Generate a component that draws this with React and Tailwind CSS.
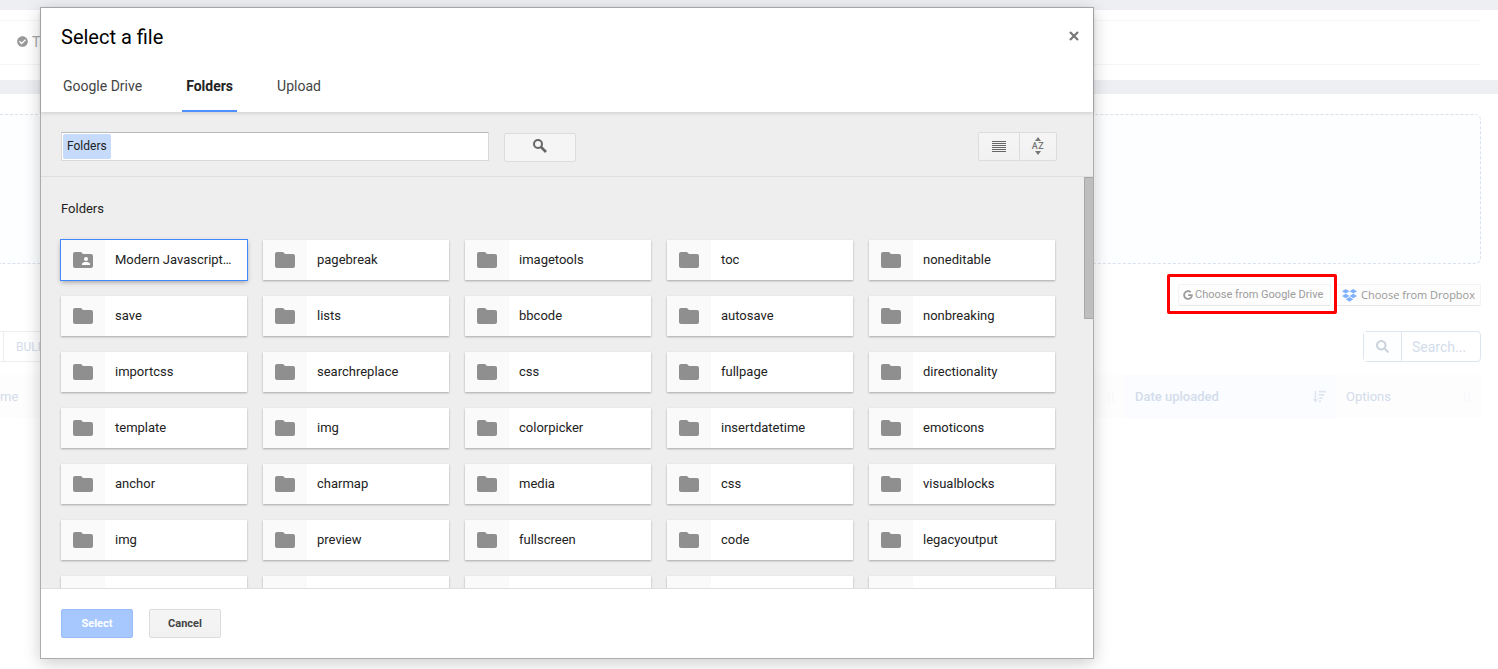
import React, { useState } from 'react';
import { FaCheckCircle, FaGoogle, FaSearch, FaSortAmountDown } from 'react-icons/fa';

const folders = [
  'Modern Javascript…', 'pagebreak', 'imagetools', 'toc', 'noneditable',
  'save', 'lists', 'bbcode', 'autosave', 'nonbreaking',
  'importcss', 'searchreplace', 'css', 'fullpage', 'directionality',
  'template', 'img', 'colorpicker', 'insertdatetime', 'emoticons',
  'anchor', 'charmap', 'media', 'css', 'visualblocks',
  'img', 'preview', 'fullscreen', 'code', 'legacyoutput',
  '', '', '', '', '',
];

const tabs = ['Google Drive', 'Folders', 'Upload'];

function FolderIcon({ shared }) {
  return (
    <svg width="20" height="16" viewBox="0 0 20 16" aria-hidden="true">
      <path d="M2 0h6l2 2h8a2 2 0 0 1 2 2v10a2 2 0 0 1-2 2H2a2 2 0 0 1-2-2V2a2 2 0 0 1 2-2z" fill="#8f8f8f" />
      {shared && (
        <path d="M13 5a2 2 0 1 1 0 4 2 2 0 0 1 0-4zM9 13v-1c0-1.400 2.700-2 4-2s4 .6 4 2v1z" fill="#fff" />
      )}
    </svg>
  );
}

function DropboxIcon() {
  return (
    <svg width="15" height="13" viewBox="0 0 15 13" fill="#7fb1ff" className="shrink-0" aria-hidden="true">
      <path d="M3.750 0l3.750 2.300-3.750 2.300L0 2.300zM11.250 0L15 2.300l-3.750 2.300L7.500 2.300zM3.750 4.700L7.500 7 3.750 9.300 0 7zM11.250 4.700L15 7l-3.750 2.300L7.500 7zM7.500 8l3.750 2.300L7.500 12.700l-3.750-2.400z" />
    </svg>
  );
}

function SortIcon() {
  return (
    <svg width="8" height="10" viewBox="0 0 8 10" fill="none" stroke="#f8f8fa" aria-hidden="true">
      <path d="M2 0v10M6 0v10" strokeWidth="1.500" />
    </svg>
  );
}

function Background() {
  return (
    <div className="h-full bg-white text-[#d3dceb]">
      <div className="h-[10px] bg-[#edeff3]" />
      <div className="h-[70px] pt-[10px] pr-[17px]">
        <div className="h-[45px] pb-0.5 border-y border-[#f5f5f5] flex items-center gap-1 pl-[17px] text-sm text-[#a6a6a6]">
          <FaCheckCircle size={11} className="text-[#999]" />
          <span>Ta</span>
        </div>
      </div>
      <div className="h-[14px] bg-[#edeff3]" />

      <div className="pt-5 pr-[17px]">
        <div className="h-[150px] border border-l-0 border-dashed border-[#d9e2ec] rounded-r-md bg-[#fdfeff]" />

        <div className="flex justify-end items-center mt-[10px] h-10">
          <div className="h-10 w-[170px] border-[3px] border-[#f00] rounded-xs flex items-center justify-end pt-0.5 pr-[3px]">
            <button className="h-[22px] w-[153px] flex items-center gap-0.5 pl-1 border border-[#f3f3f3] border-b-[#e6e6e6] rounded-xs bg-[#fdfdfd] text-[11px] text-[#9c9c9c] whitespace-nowrap">
              <FaGoogle size={10} className="shrink-0" /> Choose from Google Drive
            </button>
          </div>
          <button className="mt-0.5 h-[22px] w-[144px] flex items-center gap-1 pl-[5px] border border-l-0 border-[#f3f3f3] border-b-[#e6e6e6] rounded-r-xs bg-[#fdfdfd] font-['Open_Sans',sans-serif] text-[11px] text-[#999] whitespace-nowrap">
            <DropboxIcon /> Choose from Dropbox
          </button>
        </div>

        <div className="flex justify-between mt-[17px]">
          <div className="flex h-[31px] border-y border-[#eceef2] text-xs">
            <div className="w-[3px]" />
            <button className="border-x border-[#eceef2] px-3">BULK ACTIONS</button>
          </div>
          <label className="flex h-[31px] w-[118px] border border-[#dfe5ee] rounded">
            <span className="w-[38px] shrink-0 flex items-center justify-center border-r border-[#dfe5ee] bg-[#fdfeff] text-[#ccd4de]">
              <FaSearch size={13} />
            </span>
            <input
              type="text"
              aria-label="Search"
              placeholder="Search..."
              className="min-w-0 flex-1 px-[10px] text-sm placeholder:text-[#d3dceb] outline-none"
            />
          </label>
        </div>

        <table className="w-full table-fixed mt-[13px] text-[13px] text-left">
          <thead>
            <tr className="h-[43px] bg-[#fdfdfd]">
              <th className="pr-[10px] font-normal">
                <span className="flex items-center justify-between">
                  <span>me</span>
                  <SortIcon />
                </span>
              </th>
              <th className="w-[211px] px-[10px] font-medium bg-[#fafcff]">
                <span className="flex items-center justify-between">
                  <span>Date uploaded</span>
                  <FaSortAmountDown size={13} className="text-[#dfe6f0]" />
                </span>
              </th>
              <th className="w-[145px] px-[10px] font-normal">
                <span className="flex items-center justify-between">
                  <span>Options</span>
                  <SortIcon />
                </span>
              </th>
            </tr>
          </thead>
        </table>
      </div>
    </div>
  );
}

function FolderCard({ name, first, selected, onSelect }) {
  return (
    <button
      onClick={onSelect}
      className={
        selected
          ? 'h-10 flex bg-white text-left outline outline-[#4387fd] shadow-[0_2px_5px_rgba(0,0,0,0.35)]'
          : 'h-10 flex bg-white text-left shadow-[0_1px_2px_rgba(0,0,0,0.3)]'
      }
    >
      <span className="w-11 h-10 shrink-0 flex items-center justify-center bg-[#fafafa]">
        <FolderIcon shared={first} />
      </span>
      <span className="px-[10px] leading-10 text-[13px] text-[#222] truncate">{name}</span>
    </button>
  );
}

export default function App() {
  const [activeTab, setActiveTab] = useState('Folders');
  const [selected, setSelected] = useState(0);

  return (
    <div className="relative h-screen overflow-hidden font-[Roboto,sans-serif]">
      <Background />

      <div className="absolute inset-0 pt-[7px] pb-[10px] pl-10">
        <div
          role="dialog"
          aria-label="Select a file"
          className="h-full w-full max-w-[1054px] flex flex-col bg-white border border-[#acacac] shadow-[0_4px_16px_rgba(0,0,0,0.2)]"
        >
          {/* Header */}
          <div className="shrink-0 relative z-10 shadow-[0_1px_4px_rgba(0,0,0,0.15)]">
            <div className="h-[58px] pl-5 pr-[13px] flex items-center justify-between">
              <h1 className="text-xl text-black">Select a file</h1>
              <button aria-label="Close" className="p-px mb-0.5">
                <svg width="10" height="10" viewBox="0 0 10 10" stroke="#777" strokeWidth="2.200">
                  <path d="M1 1l8 8M9 1L1 9" />
                </svg>
              </button>
            </div>
            <div className="h-[46px] pl-[18px] flex gap-9 text-sm text-[#444]">
              {tabs.map((tab) => (
                <button
                  key={tab}
                  onClick={() => setActiveTab(tab)}
                  className={
                    activeTab === tab
                      ? 'px-1 pb-1 border-b-2 border-[#4d90fe] font-bold text-[#222]'
                      : 'px-1 pb-1 border-b-2 border-transparent'
                  }
                >
                  {tab}
                </button>
              ))}
            </div>
          </div>

          {/* Search bar */}
          <div className="shrink-0 h-[65px] pt-1 pl-5 pr-9 flex items-center bg-[#eee] border-b border-[#dfdfdf]">
            <div className="flex h-[29px] w-[428px] p-px bg-white border border-[#d9d9d9] border-t-[#bbb]">
              <span className="px-1 leading-[25px] rounded-xs bg-[#c6dafc] text-xs text-[#222]">Folders</span>
              <input type="text" aria-label="Search folders" className="min-w-0 flex-1 px-1 text-xs outline-none" />
            </div>
            <button aria-label="Search" className="ml-[15px] mt-0.5 h-[29px] w-[72px] flex items-center justify-center pb-0.5 rounded-xs border border-[#dcdcdc] bg-[#f5f5f5]">
              <svg width="14" height="14" viewBox="0 0 14 14" fill="none" stroke="#666">
                <circle cx="5" cy="5" r="4" strokeWidth="2" />
                <path d="M8 8l5 5" strokeWidth="2.600" />
              </svg>
            </button>
            <div className="ml-auto flex">
              <button aria-label="List view" className="h-[29px] w-[42px] flex items-center justify-center rounded-l-xs border border-[#dcdcdc] bg-linear-to-b from-[#f5f5f5] to-[#f1f1f1]">
                <svg width="14" height="11" viewBox="0 0 14 11" fill="#666">
                  <path d="M0 0h14v1H0zM0 2h14v1H0zM0 4h14v1H0zM0 6h14v1H0zM0 8h14v1H0zM0 10h14v1H0z" />
                </svg>
              </button>
              <button aria-label="Sort by name" className="-ml-px h-[29px] w-[38px] flex flex-col items-center justify-center rounded-r-xs border border-[#dcdcdc] bg-linear-to-b from-[#f5f5f5] to-[#f1f1f1]">
                <svg width="6" height="4" viewBox="0 0 6 4" fill="#777"><path d="M3 0l3 4H0z" /></svg>
                <span className="text-[9px] leading-[10px] font-medium tracking-wider text-[#777]">AZ</span>
                <svg width="6" height="4" viewBox="0 0 6 4" fill="#777"><path d="M3 4l3-4H0z" /></svg>
              </button>
            </div>
          </div>

          {/* Folder list */}
          <div className="flex-1 min-h-0 flex overflow-hidden bg-[#eee]">
            <div className="flex-1 pl-5 pr-[29px]">
              <h2 className="h-[63px] leading-[63px] text-[13px] text-[#222]">Folders</h2>
              <div className="grid grid-cols-5 gap-4">
                {folders.map((name, i) => (
                  <FolderCard
                    key={i}
                    name={name}
                    first={i === 0}
                    selected={selected === i}
                    onSelect={() => setSelected(i)}
                  />
                ))}
              </div>
            </div>
            <div className="w-[9px] h-[142px] bg-[#bebebe] border border-r-0 border-[#a8a8a8]" />
          </div>

          {/* Footer */}
          <div className="shrink-0 h-[70px] px-5 flex items-center gap-4 border-t border-[#dfdfdf] text-[11px] font-bold">
            <button className="h-[29px] w-[72px] pt-px rounded-xs border border-[#98bcfb] bg-[#a6c8ff] text-white">Select</button>
            <button className="h-[29px] w-[72px] pt-px rounded-xs border border-[#dcdcdc] bg-linear-to-b from-[#f5f5f5] to-[#f1f1f1] text-[#444]">Cancel</button>
          </div>
        </div>
      </div>
    </div>
  );
}
